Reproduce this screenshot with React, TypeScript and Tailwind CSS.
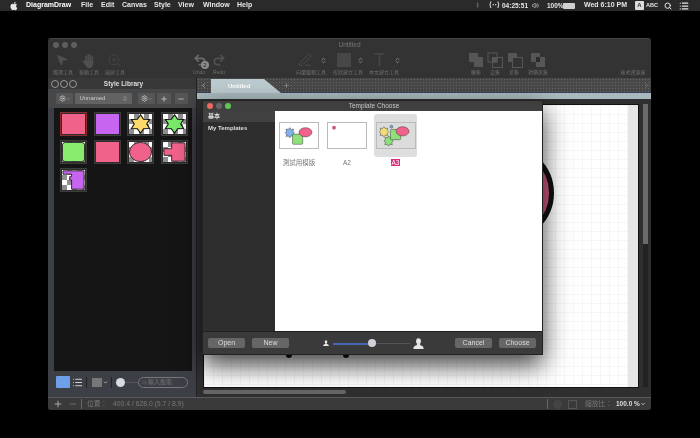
import { Search, List, Volume2, Plus, Minus, ChevronDown, ChevronLeft, ChevronRight, ChevronsUpDown, Settings, MousePointer2, ZoomIn, Undo2, Redo2, PenLine } from 'lucide-react'

const cjk = '[font-family:"Liberation_Sans","Noto_Sans_CJK_TC",sans-serif]'

const menus = [
  { label: 'File', w: 'w-[20px]' },
  { label: 'Edit', w: 'w-[21px]' },
  { label: 'Canvas', w: 'w-[32px]' },
  { label: 'Style', w: 'w-[24px]' },
  { label: 'View', w: 'w-[25px]' },
  { label: 'Window', w: 'w-[34px]' },
  { label: 'Help', w: 'w-[20px]' },
]

function AppleLogo() {
  return (
    <svg viewBox="0 0 24 24" className="w-[10px] h-[10px] fill-[#e8e8e8]">
      <path d="M17 12.6c0-2.5 2-3.7 2.1-3.8-1.2-1.7-3-2-3.6-2-1.5-.2-3 .9-3.8.9s-2-.9-3.300-.9c-1.7 0-3.3 1-4.1 2.5-1.8 3-.5 7.6 1.3 10.1.9 1.2 1.9 2.6 3.2 2.5 1.3 0 1.8-.8 3.3-.8s2 .8 3.3.8c1.4 0 2.3-1.2 3.1-2.4 1-1.4 1.4-2.8 1.4-2.8s-2.9-1.1-2.9-4.1zM14.6 5.2c.7-.9 1.2-2 1-3.2-1 0-2.2.7-2.9 1.5-.6.7-1.2 1.9-1 3 1.1.1 2.2-.5 2.9-1.3z" />
    </svg>
  )
}

function MenuBar() {
  return (
    <div className="h-[11px] bg-[#2a2a2a] flex items-center text-[7px] text-[#e6e6e6] font-semibold shrink-0">
      <div className="ml-[9px] w-[17px]"><AppleLogo /></div>
      <span className="w-[55px] font-bold text-white">DiagramDraw</span>
      {menus.map((m) => (
        <span key={m.label} className={m.w}>{m.label}</span>
      ))}
      <div className="ml-auto flex items-center">
        <span className="text-[#6a6a6a] text-[6px] mr-[9px]">ᛒ</span>
        <span className="text-[7px] mr-[2px]">⟨··⟩</span>
        <span className="text-[6.5px] w-[30px]">04:25:51</span>
        <Volume2 className="w-[7px] h-[7px] mr-[8px]" />
        <span className="text-[6.5px] w-[16px]">100%</span>
        <div className="w-[12px] h-[6px] bg-[#cfcfcf] rounded-[1px] mr-[9px]" />
        <span className="w-[51px]">Wed 6:10 PM</span>
        <span className="w-[9px] h-[9px] bg-[#dddddd] rounded-[1px] text-[#333] text-[6px] flex items-center justify-center mr-[2px]">A</span>
        <span className="text-[5.5px] w-[18px]">ABC</span>
        <Search className="w-[8px] h-[8px] mr-[7px]" strokeWidth={3} />
        <List className="w-[10px] h-[10px] mr-[11px]" strokeWidth={3} />
      </div>
    </div>
  )
}

function TrafficOff() {
  return (
    <div className="flex gap-[3px]">
      <span className="w-[6px] h-[6px] rounded-full bg-[#5e5e5e]" />
      <span className="w-[6px] h-[6px] rounded-full bg-[#5e5e5e]" />
      <span className="w-[6px] h-[6px] rounded-full bg-[#5e5e5e]" />
    </div>
  )
}

function ToolLabel({ text, className }: { text: string; className: string }) {
  return <span className={`text-[5px] leading-[6px] text-[#6f6f6f] text-center whitespace-nowrap ${cjk} ${className}`}>{text}</span>
}

function HandIcon() {
  return (
    <svg viewBox="0 0 16 16" className="w-[15px] h-[15px] fill-[#4f4f4f]">
      <rect x="4.5" y="3" width="1.8" height="8" rx=".9" />
      <rect x="6.8" y="1" width="1.8" height="9" rx=".9" />
      <rect x="9" y="1.5" width="1.8" height="9" rx=".9" />
      <rect x="11.2" y="3.5" width="1.8" height="8" rx=".9" />
      <path d="M4.5 8h8.5v3.5c0 2.5-1.5 4.5-4 4.500-2 0-3-.8-4-2.500L1.800 9.500c-.6-1 .6-1.900 1.400-1.100z" />
    </svg>
  )
}

function SetOps({ kind }: { kind: number }) {
  const solid = '#565656'
  return (
    <svg viewBox="0 0 16 16" className="w-[16px] h-[16px]">
      {kind === 0 && <path d="M1 1h9v4h5v10H6v-5H1z" fill={solid} />}
      {kind === 1 && (
        <g fill="none" stroke="#565656">
          <rect x="1" y="1" width="9" height="9" />
          <rect x="5.5" y="5.5" width="10" height="10" />
          <rect x="5.5" y="5.5" width="4.5" height="4.5" fill={solid} />
        </g>
      )}
      {kind === 2 && (
        <g>
          <path d="M1 1h9v4.500H5.500V10H1z" fill={solid} />
          <rect x="5.5" y="5.5" width="10" height="10" fill="none" stroke="#565656" />
        </g>
      )}
      {kind === 3 && (
        <g>
          <path d="M1 1h9v4h5v10H6v-5H1z" fill={solid} />
          <rect x="6" y="5" width="4" height="5" fill="#2b2b2b" />
        </g>
      )}
    </svg>
  )
}

function Toolbar() {
  return (
    <div className="h-[39px] flex flex-col shrink-0 bg-[#333333]">
      <div className="h-[12px] flex items-center relative px-[5px]">
        <TrafficOff />
        <span className="flex-1 text-center text-[6.5px] text-[#777] mr-[24px]">Untitled</span>
      </div>
      <div className="flex h-[18px] items-center text-[#505050]">
        <div className="w-[27px] flex justify-center"><MousePointer2 className="w-[14px] h-[14px] fill-[#505050]" strokeWidth={1} /></div>
        <div className="w-[26px] flex justify-center"><HandIcon /></div>
        <div className="w-[26px] flex justify-center"><ZoomIn className="w-[15px] h-[15px]" strokeWidth={1} /></div>
        <div className="ml-[63px] w-[20px] flex justify-center relative">
          <Undo2 className="w-[14px] h-[14px] text-[#6a6a6a]" strokeWidth={3} />
          <span className="absolute right-[1px] bottom-[-2px] w-[8px] h-[8px] rounded-full bg-[#8a8a8a] text-[6px] leading-[8px] text-center text-[#222]">2</span>
        </div>
        <div className="w-[17px] flex justify-center"><Redo2 className="w-[14px] h-[14px]" strokeWidth={3} /></div>
        <PenLine className="w-[14px] h-[14px] ml-[71px]" strokeWidth={1.5} />
        <ChevronsUpDown className="w-[7px] h-[9px] ml-[8px] text-[#888]" strokeWidth={3} />
        <div className="ml-[10px] w-[14px] h-[14px] bg-[#474747]" />
        <ChevronsUpDown className="w-[7px] h-[9px] ml-[6px] text-[#888]" strokeWidth={3} />
        <span className="ml-[9px] w-[13px] text-center text-[18px] leading-[18px] text-[#474747]">T</span>
        <ChevronsUpDown className="w-[7px] h-[9px] ml-[8px] text-[#888]" strokeWidth={3} />
        <div className="ml-[67px] flex">
          <SetOps kind={0} />
          <div className="ml-[3px]"><SetOps kind={1} /></div>
          <div className="ml-[4px]"><SetOps kind={2} /></div>
          <div className="ml-[7px]"><SetOps kind={3} /></div>
        </div>
      </div>
      <div className="flex items-center h-[8px] mt-[-1px]">
        <ToolLabel text="選擇工具" className="w-[26px] ml-[2px]" />
        <ToolLabel text="移動工具" className="w-[26px]" />
        <ToolLabel text="縮放工具" className="w-[26px]" />
        <ToolLabel text="Undo" className="w-[20px] ml-[61px]" />
        <ToolLabel text="Redo" className="w-[20px]" />
        <ToolLabel text="向量編輯工具" className="w-[34px] ml-[65px]" />
        <ToolLabel text="形狀建立工具" className="w-[34px] ml-[3px]" />
        <ToolLabel text="本文建立工具" className="w-[34px] ml-[2px]" />
        <ToolLabel text="聯集" className="w-[16px] ml-[67px]" />
        <ToolLabel text="交集" className="w-[16px] ml-[3px]" />
        <ToolLabel text="差集" className="w-[16px] ml-[3px]" />
        <ToolLabel text="對稱差集" className="w-[24px] ml-[4px]" />
        <ToolLabel text="樣式資源庫" className="w-[30px] ml-[68px]" />
      </div>
    </div>
  )
}

const checker = 'bg-[conic-gradient(#8f8f8f_25%,#ffffff_0_50%,#8f8f8f_0_75%,#ffffff_0)] bg-[length:10px_10px]'

function Swatch({ kind }: { kind: number }) {
  const star = 'M12 1L15.25 6.37 21.5 6.5 18.5 12 21.5 17.5 15.25 17.63 12 23 8.75 17.63 2.5 17.5 5.5 12 2.5 6.5 8.75 6.37z'
  const notch = 'M9 1h13a1 1 0 0 1 1 1v20a1 1 0 0 1-1 1H9v-7H1V8h8z'
  const hasChecker = kind === 2 || kind === 3 || kind === 4 || kind === 6 || kind === 7 || kind === 8
  return (
    <div className={`w-[27px] h-[24px] border p-[1px] bg-[#2c2c2c] ${kind === 0 ? 'border-[#8a2f2f]' : 'border-[#3c3c3c]'}`}>
      <div className={`w-full h-full ${hasChecker ? checker : ''}`}>
        <svg viewBox="0 0 24 24" preserveAspectRatio="none" className="w-full h-full block">
          {kind === 0 && <rect width="24" height="24" fill="#f0628a" />}
          {kind === 1 && <rect width="24" height="24" fill="#c765f0" />}
          {kind === 2 && <path d={star} fill="#fbd96b" stroke="#111" strokeWidth="1.2" />}
          {kind === 3 && <path d={star} fill="#79ea6a" stroke="#111" strokeWidth="1.2" />}
          {kind === 4 && <rect x=".5" y=".5" width="23" height="23" rx="3" fill="#8aec6e" stroke="#222" />}
          {kind === 5 && <rect width="24" height="24" fill="#f0628a" />}
          {kind === 6 && <ellipse cx="12" cy="12" rx="11.5" ry="11.5" fill="#f0628a" stroke="#222" />}
          {kind === 7 && <path d={notch} fill="#f0628a" stroke="#222" />}
          {kind === 8 && <path d="M1 1h22v22H10V12H8V8h2V5H1z" fill="#c765f0" stroke="#222" />}
        </svg>
      </div>
    </div>
  )
}

function SmallBtn({ children }: { children: React.ReactNode }) {
  return <div className="h-[11px] bg-[#565656] rounded-[1px] flex items-center justify-center text-[#ddd]">{children}</div>
}

function StylePanel() {
  return (
    <div className="w-[149px] shrink-0 flex flex-col bg-[#3d3f46] border-r border-[#222]">
      <div className="h-[11px] bg-[#383838] flex items-center px-[3px] relative shrink-0">
        <div className="flex gap-[1px]">
          <span className="w-[8px] h-[8px] rounded-full border border-[#999]" />
          <span className="w-[8px] h-[8px] rounded-full border border-[#999]" />
          <span className="w-[8px] h-[8px] rounded-full border border-[#999]" />
        </div>
        <span className="flex-1 text-center text-[6.5px] font-semibold text-[#ddd] mr-[23px]">Style Library</span>
      </div>
      <div className="flex items-center h-[19px] px-[8px] gap-[2px] shrink-0 bg-[#454748]">
        <div className="w-[18px]"><SmallBtn><Settings className="w-[7px] h-[7px]" /><ChevronDown className="w-[4px] h-[4px]" /></SmallBtn></div>
        <div className="w-[58px] h-[11px] bg-[#626262] rounded-[1px] flex items-center px-[4px] text-[6px] text-[#ccc] justify-between">
          Unnamed
          <ChevronsUpDown className="w-[6px] h-[7px]" />
        </div>
        <div className="w-[18px] ml-[4px]"><SmallBtn><Settings className="w-[7px] h-[7px]" /><ChevronDown className="w-[4px] h-[4px]" /></SmallBtn></div>
        <div className="w-[14px]"><SmallBtn><Plus className="w-[8px] h-[8px]" /></SmallBtn></div>
        <div className="w-[14px] ml-[2px]"><SmallBtn><Minus className="w-[8px] h-[8px]" /></SmallBtn></div>
      </div>
      <div className="ml-[6px] mr-[4px] flex-1 bg-[#151515] pt-[4px] pl-[6px]">
        <div className="grid grid-cols-[27px_27px_27px_27px] gap-x-[6.5px] gap-y-[4px]">
          {[0, 1, 2, 3, 4, 5, 6, 7, 8].map((k) => (
            <Swatch key={k} kind={k} />
          ))}
        </div>
      </div>
      <div className="h-[22px] flex items-center pl-[8px] shrink-0">
        <div className="w-[14px] h-[12px] bg-[#6f9fe8] rounded-[1px]" />
        <List className="w-[11px] h-[11px] ml-[2px] text-[#ddd]" strokeWidth={2} />
        <span className="w-[1px] h-[11px] bg-[#222] ml-[3px]" />
        <div className="w-[10px] h-[9px] bg-[#777] ml-[5px]" />
        <ChevronDown className="w-[5px] h-[5px] ml-[1px] text-[#eee]" strokeWidth={3} />
        <span className="w-[1px] h-[11px] bg-[#222] ml-[3px]" />
        <span className="w-[9px] h-[9px] rounded-full bg-[#d8dbe3] ml-[4px]" />
        <span className="w-[13px] h-[1px] bg-[#555]" />
        <div className={`w-[50px] h-[11px] rounded-full border border-[#777] flex items-center pl-[3px] gap-[1px] text-[6px] text-[#777] ${cjk}`}>
          <Search className="w-[5px] h-[5px]" />
          輸入搜索
        </div>
      </div>
      <div className="h-[4px] shrink-0" />
    </div>
  )
}

function Tabs() {
  return (
    <div className="h-[15px] relative bg-[#484848] bg-[radial-gradient(#666666_1px,transparent_1px)] bg-[length:3px_3px] shrink-0 flex items-center justify-between border-b border-[#39405f]">
      <ChevronLeft className="w-[7px] h-[7px] ml-[3px] text-[#ddd]" />
      <div className="absolute left-[14px] top-[1px] w-[70px] h-[14px] bg-[#bccbcf] [clip-path:polygon(0_0,53px_0,70px_100%,0_100%)] pl-[17px] text-[6px] leading-[14px] font-semibold text-white">
        Untitled
      </div>
      <Plus className="absolute left-[86px] top-[4px] w-[7px] h-[7px] text-[#999]" />
      <ChevronRight className="w-[7px] h-[7px] mr-[1px] text-[#999]" />
    </div>
  )
}

function Canvas() {
  return (
    <div className="flex-1 bg-[#2f2f2f] flex flex-col min-h-0">
      <div className="h-[6px] bg-[#a9babe] shrink-0" />
      <div className="flex-1 flex min-h-0 pl-[6px] pt-[5px]">
        <div className="flex-1 flex flex-col min-w-0">
          <div className="flex-1 border border-[#111] bg-[#e6e6e6] pr-[10px] relative overflow-hidden">
            <div className="w-full h-full bg-white bg-[linear-gradient(#f6f6f6_1px,transparent_1px),linear-gradient(90deg,#f6f6f6_1px,transparent_1px)] bg-[length:9px_9px]" />
            <div className="absolute left-[254px] top-[40px] w-[96px] h-[96px] rounded-full bg-[#d85c86] border-[5px] border-[#111]" />
            <span className="absolute left-[82px] top-[247px] w-[6px] h-[6px] rounded-full bg-[#111]" />
            <span className="absolute left-[139px] top-[247px] w-[6px] h-[6px] rounded-full bg-[#111]" />
          </div>
          <div className="h-[9px] shrink-0 py-[2px]">
            <div className="w-[143px] h-[4px] bg-[#666] rounded-[2px]" />
          </div>
        </div>
        <div className="w-[12px] shrink-0 flex justify-center pb-[10px]">
          <div className="w-[5px] h-full bg-[#222]">
            <div className="w-full h-[140px] bg-[#6a6a6a]" />
          </div>
        </div>
      </div>
    </div>
  )
}

function Person({ size }: { size: string }) {
  return (
    <svg viewBox="0 0 12 12" className={`${size} fill-[#e6e6e6]`}>
      <ellipse cx="6" cy="3.5" rx="2.6" ry="3.2" />
      <path d="M4.500 6.500h3L8 8c1.500.4 3 1 3.500 2.500V12H.5v-1.500C1 9 2.500 8.400 4 8z" />
    </svg>
  )
}

function DialogBtn({ label }: { label: string }) {
  return <div className="w-[37px] h-[10px] bg-[#666666] rounded-[2px] text-[7px] leading-[10px] text-center text-[#dddddd]">{label}</div>
}

function TemplateArt({ kind }: { kind: number }) {
  const star = 'M10 5l1.500 2 2.500-.5-.5 2.500 1.500 1.500-1.500 1.500.5 2.500-2.500-.5-1.500 2-1.500-2-2.500.5.5-2.500-1.500-1.500 1.500-1.500-.5-2.500 2.500.5z'
  return (
    <svg viewBox="0 0 40 27" className={`w-[40px] h-[27px] border border-[#bbb] ${kind === 2 ? 'bg-[#dcdcdc]' : 'bg-white'}`}>
      {kind === 0 && (
        <g stroke="#333" strokeWidth=".5">
          <path d={star} fill="#7fb0ea" />
          <rect x="13" y="12" width="11" height="11" rx="1" fill="#8fe07a" />
          <ellipse cx="27" cy="10" rx="7" ry="5" fill="#f0628a" />
        </g>
      )}
      {kind === 1 && <circle cx="6" cy="5" r="2" fill="#c8557c" />}
      {kind === 2 && (
        <g stroke="#333" strokeWidth=".5">
          <path d={star} transform="translate(-3 -1)" fill="#f4dc78" />
          <path d={star} transform="translate(2 9)" fill="#8fe07a" />
          <rect x="14" y="7" width="11" height="11" rx="1" fill="#8fe07a" />
          <ellipse cx="27" cy="9" rx="7" ry="5" fill="#f0628a" />
          <circle cx="15" cy="4" r="1.5" fill="#7fb0ea" />
        </g>
      )}
    </svg>
  )
}

function TemplateDialog() {
  return (
    <div className="absolute left-[154px] top-[61px] w-[341px] h-[255px] bg-[#3a3a3a] border border-[#222] shadow-[0_10px_24px_rgba(0,0,0,0.75)] flex flex-col">
      <div className="h-[10px] bg-[#3f3f3f] flex items-center px-[4px] relative shrink-0">
        <div className="flex gap-[3px]">
          <span className="w-[6px] h-[6px] rounded-full bg-[#ec6a5e]" />
          <span className="w-[6px] h-[6px] rounded-full bg-[#666]" />
          <span className="w-[6px] h-[6px] rounded-full bg-[#61c554]" />
        </div>
        <span className="flex-1 text-center text-[6.5px] text-[#c8c8c8] mr-[21px]">Template Choose</span>
      </div>
      <div className="flex-1 flex min-h-0">
        <div className={`w-[72px] bg-[#2e2e2e] text-[6px] font-semibold text-[#ddd] ${cjk}`}>
          <div className="h-[11px] bg-[#414141] pl-[5px] leading-[11px]">基本</div>
          <div className="h-[11px] pl-[5px] leading-[11px] mt-[1px]">My Templates</div>
        </div>
        <div className={`flex-1 bg-white relative text-[6.5px] text-[#777] ${cjk}`}>
          <div className="flex pt-[3px]">
            <div className="w-[48px] flex flex-col items-center pt-[8px]">
              <TemplateArt kind={0} />
              <span className="mt-[9px]">測試用模版</span>
            </div>
            <div className="w-[48px] flex flex-col items-center pt-[8px]">
              <TemplateArt kind={1} />
              <span className="mt-[9px]">A2</span>
            </div>
            <div className="flex flex-col items-center ml-[3px]">
              <div className="w-[43px] h-[43px] bg-[#dedede] rounded-[3px] flex items-center justify-center">
                <TemplateArt kind={2} />
              </div>
              <span className="mt-[2px] bg-[#dd2a7b] text-white px-[1px] leading-[7px]">A3</span>
            </div>
          </div>
        </div>
      </div>
      <div className="h-[23px] shrink-0 flex items-center px-[5px] border-t border-[#1f1f1f]">
        <DialogBtn label="Open" />
        <div className="ml-[7px]"><DialogBtn label="New" /></div>
        <div className="ml-[34px]"><Person size="w-[6px] h-[6px]" /></div>
        <div className="w-[77px] h-[1px] bg-[#555] ml-[4px] relative">
          <div className="w-[39px] h-[2px] bg-[#4468b8]" />
          <span className="absolute left-[35px] top-[-4px] w-[8px] h-[8px] rounded-full bg-[#cfd3d8]" />
        </div>
        <div className="ml-[3px]"><Person size="w-[11px] h-[11px]" /></div>
        <div className="ml-[31px]"><DialogBtn label="Cancel" /></div>
        <div className="ml-[7px]"><DialogBtn label="Choose" /></div>
      </div>
    </div>
  )
}

function StatusBar() {
  return (
    <div className="h-[13px] shrink-0 bg-[#3a3a3a] border-t border-[#5a5a5a] flex items-center text-[6.8px] text-[#777]">
      <Plus className="w-[10px] h-[10px] ml-[5px] text-[#bbb]" />
      <Minus className="w-[10px] h-[10px] ml-[5px] text-[#777]" />
      <span className="w-[1px] h-[10px] bg-[#666] ml-[3px]" />
      <span className={`ml-[5px] w-[26px] ${cjk}`}>位置：</span>
      <span>400.4 / 628.0 (5.7 / 8.9)</span>
      <span className="w-[1px] h-[10px] bg-[#666] ml-auto" />
      <span className="w-[9px] h-[9px] bg-[#444] ml-[5px] rounded-full" />
      <span className="w-[9px] h-[9px] border border-[#555] ml-[6px]" />
      <span className={`ml-[8px] w-[31px] ${cjk}`}>縮放比：</span>
      <span className="text-[#ddd] font-semibold w-[24px] text-[6.5px] whitespace-nowrap">100.0 %</span>
      <ChevronDown className="w-[6px] h-[6px] text-[#ddd] mr-[5px]" strokeWidth={3} />
    </div>
  )
}

export default function App() {
  return (
    <div className="w-[700px] h-[438px] bg-black overflow-hidden flex flex-col font-['Liberation_Sans',sans-serif] blur-[0.3px]">
      <MenuBar />
      <div className="ml-[48px] mt-[27px] w-[603px] h-[372px] bg-[#2f2f2f] rounded-[3px] border-t border-[#444] flex flex-col overflow-hidden relative">
        <Toolbar />
        <div className="flex-1 flex min-h-0">
          <StylePanel />
          <div className="flex-1 flex flex-col min-w-0">
            <Tabs />
            <Canvas />
          </div>
        </div>
        <StatusBar />
        <TemplateDialog />
      </div>
    </div>
  )
}
